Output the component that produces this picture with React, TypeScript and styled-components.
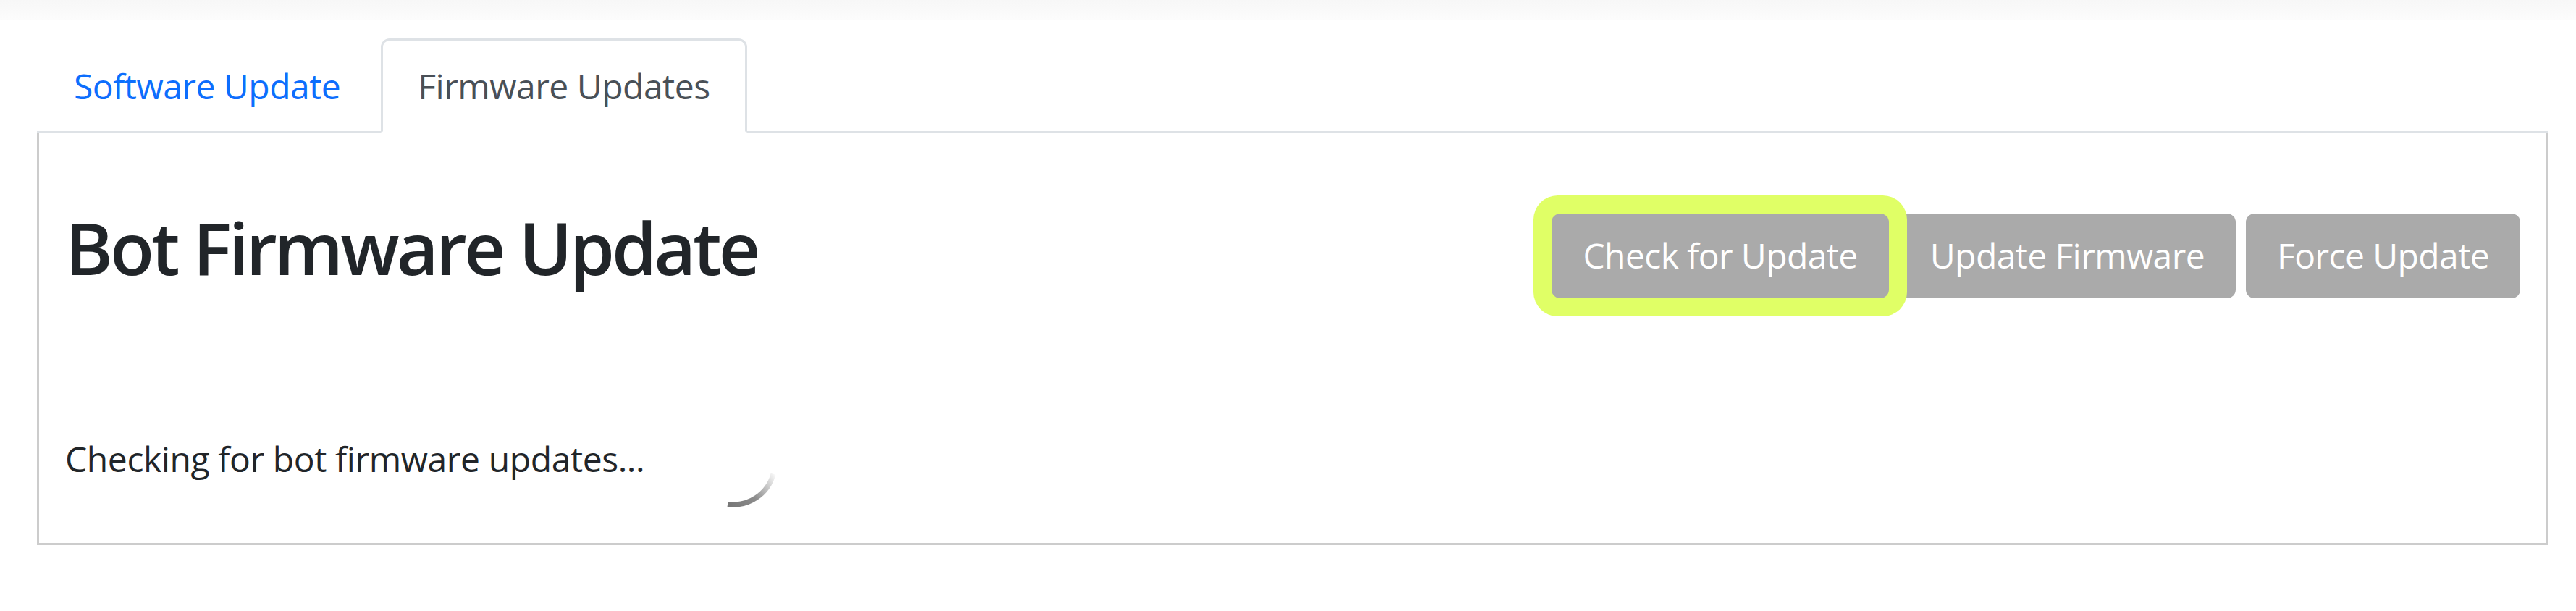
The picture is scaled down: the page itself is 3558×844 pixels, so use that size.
import React from "react";
import styled, { createGlobalStyle } from "styled-components";

const GlobalStyle = createGlobalStyle`
  body {
    margin: 0;
    background: #fff;
    font-family: "Segoe UI", "Open Sans", "Noto Sans", sans-serif;
    color: #212529;
  }
`;

const TopShade = styled.div`
  height: 27px;
  background: linear-gradient(#f7f7f7, #fcfcfc);
`;

const Content = styled.div`
  padding: 26px 38px 0 51px;
`;

const TabList = styled.div`
  display: flex;
  border-bottom: 3px solid #dee2e6;
`;

const Tab = styled.div<{ $active?: boolean }>`
  padding: 27px 48px 26px;
  margin-bottom: -3px;
  margin-right: ${(p) => (p.$active ? "0" : "5px")};
  border: 3px solid transparent;
  border-radius: 12px 12px 0 0;
  font-size: 48px;
  line-height: 72px;
  letter-spacing: -0.5px;
  color: ${(p) => (p.$active ? "#495057" : "#0d6efd")};
  background: ${(p) => (p.$active ? "#fff" : "transparent")};
  border-color: ${(p) => (p.$active ? "#dee2e6 #dee2e6 #fff" : "transparent")};
  cursor: pointer;
`;

const Panel = styled.div`
  border: 3px solid #ccc;
  border-top: none;
  padding: 97px 36px 50px;
`;

const Header = styled.div`
  display: flex;
  justify-content: space-between;
  align-items: center;
`;

const Title = styled.h1`
  margin: 0 0 24px;
  font-size: 100px;
  font-weight: 600;
  line-height: 1.2;
  letter-spacing: -4px;
  color: #212529;
`;

const ButtonGroup = styled.div`
  display: flex;
  gap: 14px;
`;

const ActionButton = styled.button<{ $focused?: boolean }>`
  height: 117px;
  padding: 0 43px;
  border: none;
  border-radius: 12px;
  background: #aaa;
  color: #fff;
  font-family: inherit;
  font-size: 48px;
  letter-spacing: -0.6px;
  line-height: 72px;
  position: relative;
  z-index: ${(p) => (p.$focused ? 1 : 0)};
  box-shadow: ${(p) => (p.$focused ? "0 0 0 25px #e0ff66" : "none")};
`;

const StatusRow = styled.div`
  margin-top: 155px;
  display: flex;
  align-items: flex-start;
  gap: 63px;
`;

const StatusText = styled.div`
  padding-top: 18px;
  font-size: 48px;
  line-height: 72px;
  letter-spacing: -0.4px;
  color: #212529;
`;

function Spinner() {
  return (
    <svg width="120" height="120" viewBox="0 0 120 120">
      <defs>
        <linearGradient id="spin" gradientUnits="userSpaceOnUse" x1="116" y1="70" x2="52" y2="117">
          <stop offset="0" stopColor="#777" stopOpacity="0" />
          <stop offset="0.55" stopColor="#777" stopOpacity="0.85" />
          <stop offset="1" stopColor="#777" />
        </linearGradient>
      </defs>
      <path
        d="M115.06 74.75 A57 57 0 0 1 52.07 116.45"
        fill="none"
        stroke="url(#spin)"
        strokeWidth="7"
      />
    </svg>
  );
}

export default function App() {
  return (
    <>
      <GlobalStyle />
      <TopShade />
      <Content>
        <TabList>
          <Tab>Software Update</Tab>
          <Tab $active>Firmware Updates</Tab>
        </TabList>
        <Panel>
          <Header>
            <Title>Bot Firmware Update</Title>
            <ButtonGroup>
              <ActionButton $focused>Check for Update</ActionButton>
              <ActionButton>Update Firmware</ActionButton>
              <ActionButton>Force Update</ActionButton>
            </ButtonGroup>
          </Header>
          <StatusRow>
            <StatusText>Checking for bot firmware updates...</StatusText>
            <Spinner />
          </StatusRow>
        </Panel>
      </Content>
    </>
  );
}
